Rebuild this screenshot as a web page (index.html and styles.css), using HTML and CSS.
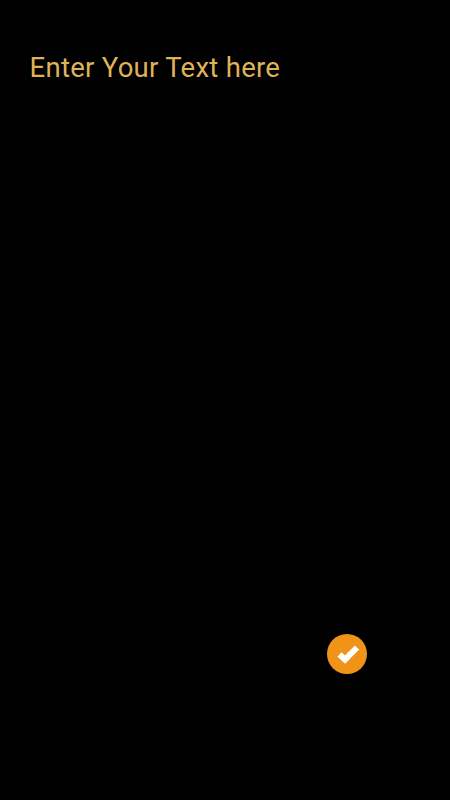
FILE: index.html
```html
<!DOCTYPE html>
<html lang="en">
<head>
<meta charset="utf-8">
<title>Enter Text</title>
<link rel="stylesheet" href="styles.css">
</head>
<body>
<main class="screen">
  <h1 class="prompt">Enter Your Text here</h1>
  <div class="actions">
    <button class="confirm" aria-label="Confirm">
      <svg viewBox="0 0 40 40" width="40" height="40"><path d="M12.500 20.500l5.500 5 12-12" fill="none" stroke="#fff" stroke-width="6"/></svg>
    </button>
  </div>
</main>
</body>
</html>
```

FILE: styles.css
```css
html, body { margin: 0; padding: 0; background: #000; }
.screen { width: 450px; height: 800px; box-sizing: border-box; padding: 50px 82.7px 0 29.5px; display: flex; flex-direction: column; background: #000; overflow: hidden; }
.prompt { margin: 0; font: 400 27.500px/36px Roboto, sans-serif; color: #dfb257; letter-spacing: 0.28px; }
.actions { margin-top: 548px; display: flex; justify-content: flex-end; }
.confirm { width: 40px; height: 40px; padding: 0; border: 0; border-radius: 50%; background: #ef9418; display: block; }
.confirm svg { display: block; }
```
